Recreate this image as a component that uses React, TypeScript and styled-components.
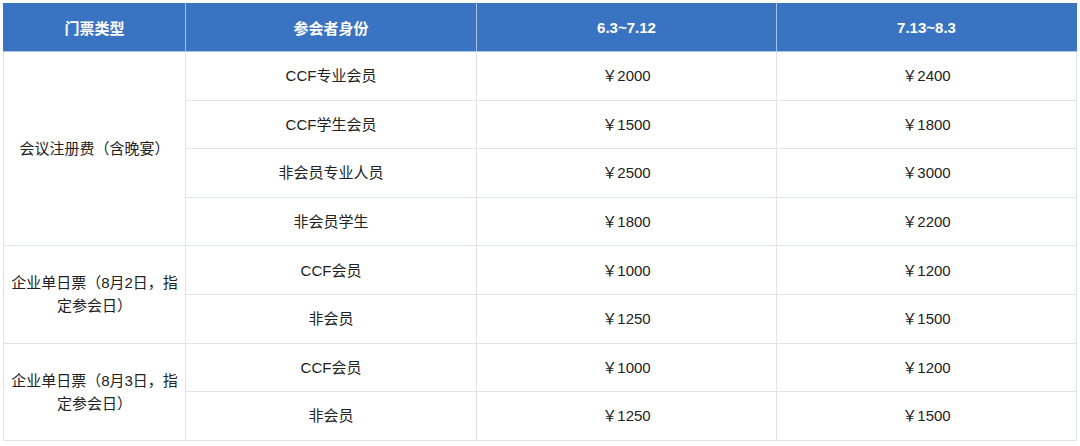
import React from "react";
import styled, { createGlobalStyle } from "styled-components";

const Global = createGlobalStyle`
  html, body { margin: 0; padding: 0; background: #ffffff; }
  body { font-family: "Liberation Sans", "Noto Sans CJK SC", sans-serif; }
`;

const Wrap = styled.div`
  padding: 3px 4px 0 3px;
`;

const Table = styled.table`
  width: 1073px;
  border-collapse: collapse;
  table-layout: fixed;
  font-size: 15px;
  color: #222;
`;

const Th = styled.th`
  background: #3b73c3;
  color: #fff;
  font-weight: bold;
  font-size: 15px;
  height: 46px;
  padding: 0 0 1px;
  border: 1px solid #a9c4e8;
  border-top-color: #3b73c3;
  text-align: center;
  &:first-child { border-left-color: #3b73c3; }
  &:last-child { border-right-color: #3b73c3; }
`;

const Td = styled.td`
  height: 47.6px;
  padding: 0 4px;
  border: 1px solid #dfe4ec;
  text-align: center;
  line-height: 23px;
  background: #fff;
`;

type Row = { who: string; early: string; late: string };
type Group = { label: string; rows: Row[] };

const groups: Group[] = [
  {
    label: "会议注册费（含晚宴）",
    rows: [
      { who: "CCF专业会员", early: "2000", late: "2400" },
      { who: "CCF学生会员", early: "1500", late: "1800" },
      { who: "非会员专业人员", early: "2500", late: "3000" },
      { who: "非会员学生", early: "1800", late: "2200" },
    ],
  },
  {
    label: "企业单日票（8月2日，指定参会日）",
    rows: [
      { who: "CCF会员", early: "1000", late: "1200" },
      { who: "非会员", early: "1250", late: "1500" },
    ],
  },
  {
    label: "企业单日票（8月3日，指定参会日）",
    rows: [
      { who: "CCF会员", early: "1000", late: "1200" },
      { who: "非会员", early: "1250", late: "1500" },
    ],
  },
];

export default function App() {
  return (
    <>
      <Global />
      <Wrap>
        <Table>
          <colgroup>
            <col style={{ width: 182 }} />
            <col style={{ width: 291 }} />
            <col style={{ width: 300 }} />
            <col style={{ width: 300 }} />
          </colgroup>
          <thead>
            <tr>
              <Th>门票类型</Th>
              <Th>参会者身份</Th>
              <Th>6.3~7.12</Th>
              <Th>7.13~8.3</Th>
            </tr>
          </thead>
          <tbody>
            {groups.map((g) =>
              g.rows.map((r, i) => (
                <tr key={g.label + i}>
                  {i === 0 && <Td rowSpan={g.rows.length}>{g.label}</Td>}
                  <Td>{r.who}</Td>
                  <Td>￥{r.early}</Td>
                  <Td>￥{r.late}</Td>
                </tr>
              ))
            )}
          </tbody>
        </Table>
      </Wrap>
    </>
  );
}
